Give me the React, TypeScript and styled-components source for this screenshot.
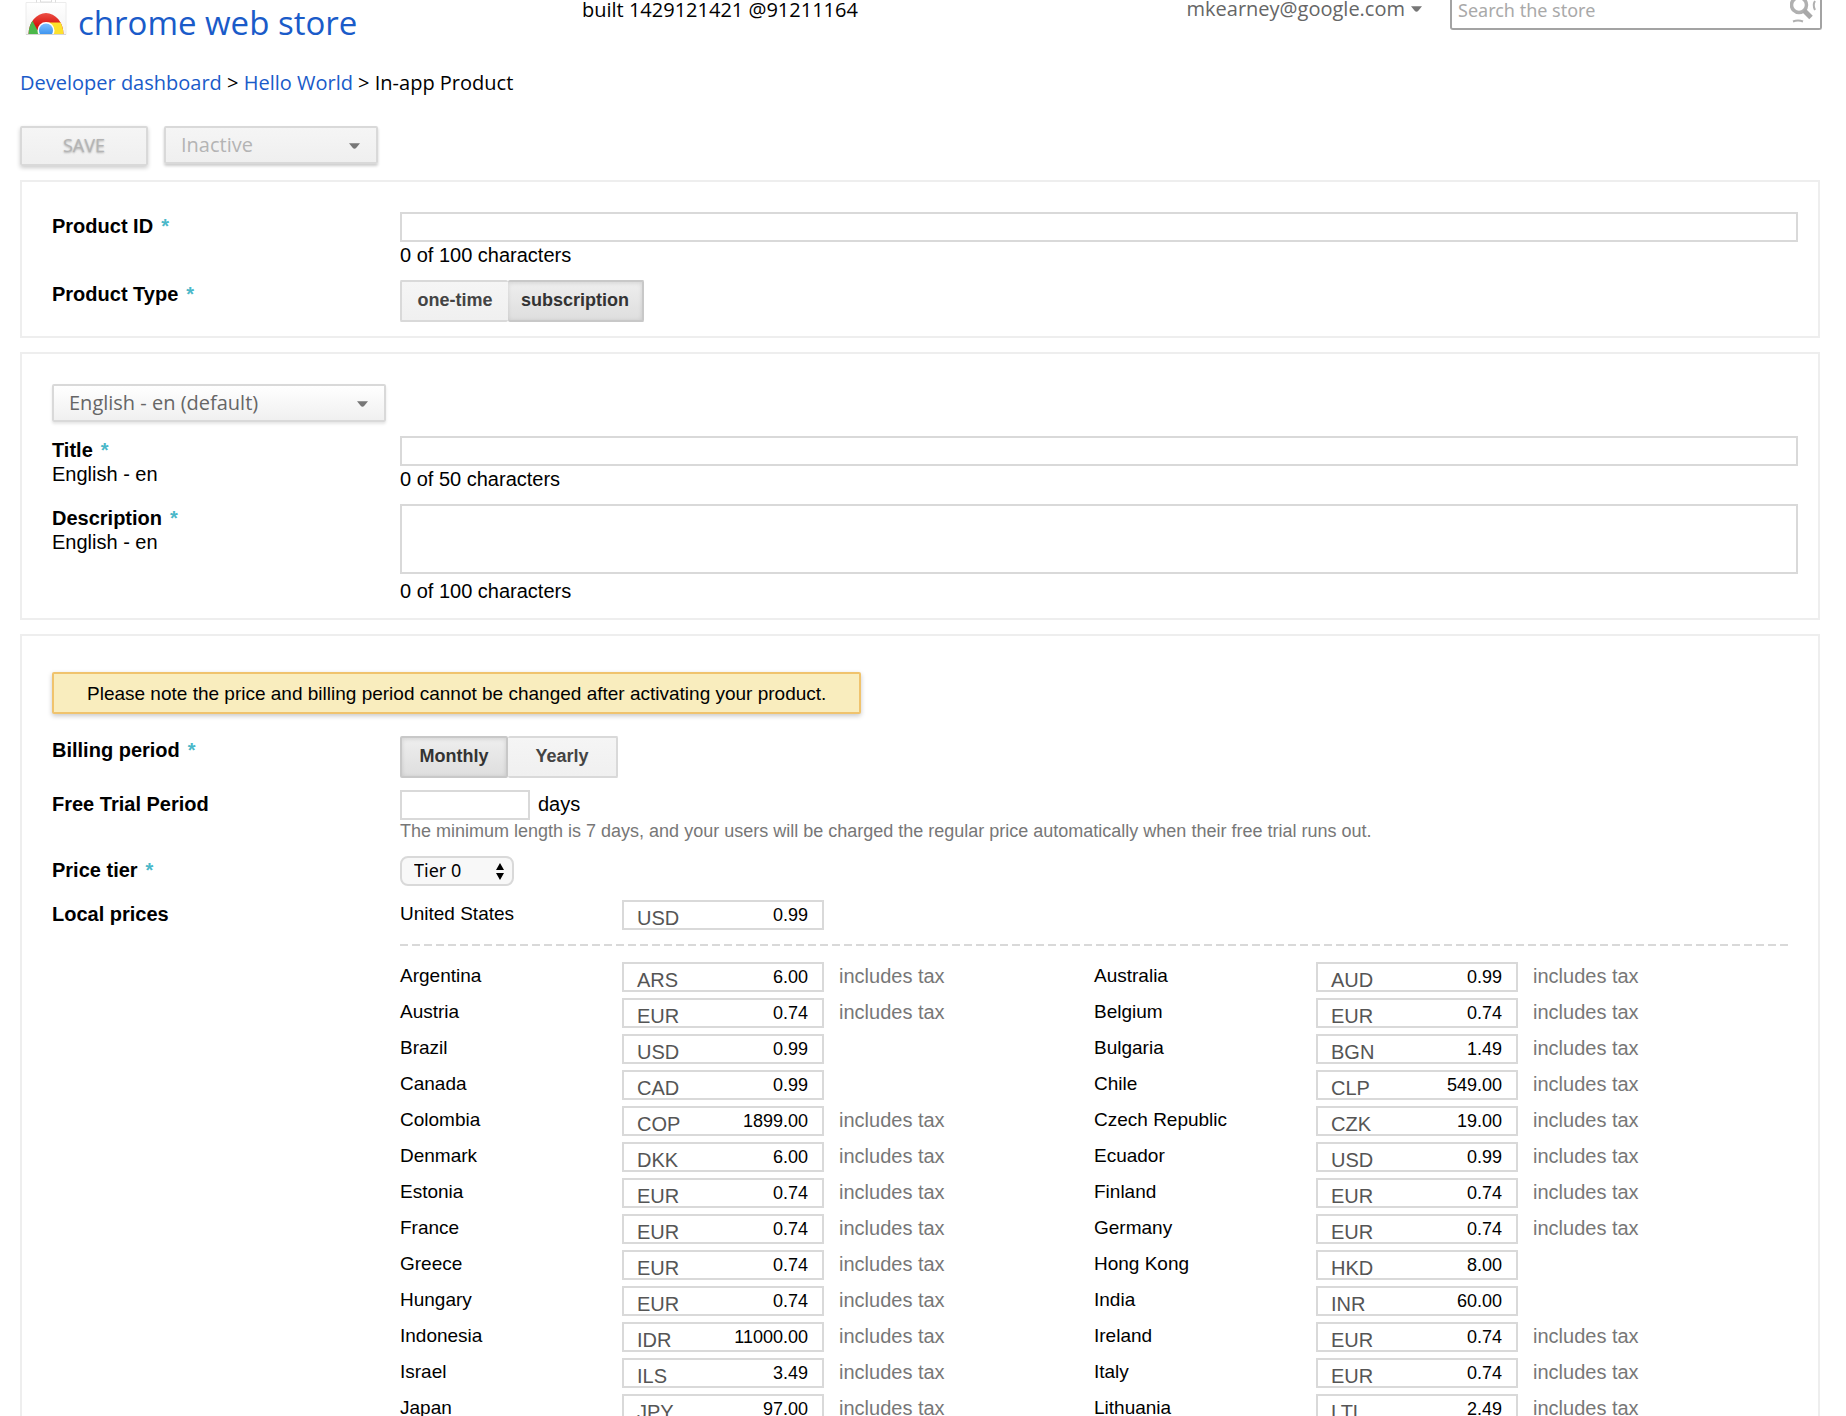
import React, { useState } from "react";
import styled, { createGlobalStyle, css } from "styled-components";

const sans = `"Liberation Sans", Arial, Helvetica, sans-serif`;
const open = `"Open Sans", "Noto Sans", sans-serif`;

const GlobalStyle = createGlobalStyle`
  *, *::before, *::after { box-sizing: border-box; }
  body { margin: 0; background: #fff; color: #000; font-family: ${sans}; font-size: 20px; }
  button, input, select, textarea { font: inherit; margin: 0; border-radius: 0; }
`;

const Page = styled.div`
  height: 100vh;
  overflow: hidden;
  padding: 0 26px 0 20px;
`;

const Header = styled.header`
  display: flex;
  align-items: flex-start;
  font-family: ${open};
  font-size: 20px;
  line-height: 20px;
`;

const Logo = styled.a`
  display: flex;
  gap: 10px;
  width: 562px;
  padding-left: 4px;
  color: #1a5bc9;
  font-size: 33px;
  line-height: 46px;
  text-decoration: none;
`;

const Account = styled.button`
  display: flex;
  align-items: center;
  gap: 6px;
  margin-left: auto;
  margin-right: 28px;
  padding: 0;
  border: 0;
  background: none;
  color: #666;
  line-height: 18px;
`;

const SearchBox = styled.form`
  display: flex;
  align-items: flex-start;
  width: 372px;
  height: 30px;
  margin-right: -2px;
  padding: 0 4px 0 6px;
  border: 2px solid #a3a3a3;
  border-top: 0;
  border-radius: 0 0 3px 3px;
`;

const SearchInput = styled.input`
  flex: 1;
  min-width: 0;
  height: 20px;
  padding: 0;
  border: 0;
  outline: 0;
  background: none;
  font-family: "Noto Sans", "Open Sans", sans-serif;
  font-size: 18px;
  line-height: 20px;
  &::placeholder { color: #a9a9a9; opacity: 1; }
`;

const IconButton = styled.button`
  display: flex;
  padding: 0;
  border: 0;
  background: none;
`;

const Breadcrumb = styled.nav`
  margin-top: 25px;
  font-family: ${open};
  line-height: 24px;
  a { color: #1a5bc9; text-decoration: none; }
`;

const Toolbar = styled.div`
  display: flex;
  align-items: flex-start;
  gap: 16px;
  margin: 31px 0 14px;
`;

const SaveButton = styled.button`
  width: 128px;
  height: 40px;
  padding: 0 0 2px;
  border: 2px solid #d9d9d9;
  border-radius: 2px;
  background: linear-gradient(#f5f5f5, #efefef);
  box-shadow: 0 2px 4px rgba(0, 0, 0, 0.2);
  color: #b4b4b4;
  font-family: ${open};
  font-size: 18px;
  text-shadow: 0 1px 2px rgba(0, 0, 0, 0.3);
`;

const MenuShell = styled.div<{ $width: number }>`
  position: relative;
  width: ${(p) => p.$width}px;
  svg { position: absolute; top: 17px; right: 18px; pointer-events: none; }
`;

const MenuSelect = styled.select<{ $muted?: boolean }>`
  display: block;
  appearance: none;
  width: 100%;
  height: 38px;
  padding: 0 36px 2px 15px;
  border: 2px solid #d9d9d9;
  border-radius: 2px;
  background: ${(p) => (p.$muted ? "linear-gradient(#f5f5f5, #efefef)" : "linear-gradient(#fff, #f0f0f0)")};
  box-shadow: 0 2px 3px rgba(0, 0, 0, ${(p) => (p.$muted ? 0.2 : 0.1)});
  color: ${(p) => (p.$muted ? "#b4b4b4" : "#666")};
  font-family: ${open};
  opacity: 1;
`;

const Panel = styled.section<{ $top?: number }>`
  margin-bottom: 14px;
  padding: ${(p) => p.$top ?? 30}px 20px 14px 30px;
  border: 2px solid #eee;
`;

const Row = styled.div<{ $gap?: number }>`
  display: grid;
  grid-template-columns: 348px minmax(0, 1fr);
  margin-bottom: ${(p) => p.$gap ?? 12}px;
  &:last-child { margin-bottom: 0; }
`;

const Label = styled.label`
  display: block;
  font-weight: bold;
  line-height: 28px;
`;

const Star = styled.span`
  margin-left: 8px;
  color: #4bb8c9;
`;

const SubLabel = styled.div`
  line-height: 20px;
`;

const fieldBox = css`
  display: block;
  border: 2px solid #d9d9d9;
  background: #fff;
  outline: 0;
`;

const TextInput = styled.input`
  ${fieldBox}
  width: 100%;
  height: 30px;
  padding: 0 8px;
`;

const TextArea = styled.textarea`
  ${fieldBox}
  width: 100%;
  height: 70px;
  margin-bottom: 4px;
  padding: 4px 8px;
  resize: none;
`;

const Counter = styled.div`
  line-height: 26px;
`;

const Segments = styled.div`
  display: flex;
`;

const Segment = styled.button<{ $on: boolean; $width: number }>`
  width: ${(p) => p.$width}px;
  height: 42px;
  padding: 0 0 2px;
  border: 2px solid ${(p) => (p.$on ? "#c8c8c8" : "#d9d9d9")};
  border-radius: 2px;
  background: ${(p) => (p.$on ? "linear-gradient(#eee, #dedede)" : "linear-gradient(#f5f5f5, #f0f0f0)")};
  box-shadow: ${(p) => (p.$on ? "inset 0 1px 4px rgba(0, 0, 0, 0.12)" : "none")};
  color: ${(p) => (p.$on ? "#333" : "#444")};
  font-size: 18px;
  font-weight: bold;
  & + & { border-left-width: ${(p) => (p.$on ? 2 : 0)}px; }
  &:first-child { border-right-width: ${(p) => (p.$on ? 2 : 0)}px; }
`;

const Notice = styled.p`
  width: fit-content;
  margin: 0 0 22px;
  padding: 8px 33px 6px;
  border: 2px solid #f0c36d;
  border-radius: 2px;
  background: #f9edbe;
  box-shadow: 0 2px 5px rgba(0, 0, 0, 0.22);
  font-size: 19px;
  line-height: 24px;
`;

const Trial = styled.div`
  display: flex;
  gap: 8px;
  line-height: 28px;
  height: 30px;
  input { width: 130px; }
`;

const Hint = styled.div`
  margin-bottom: 2px;
  color: #777;
  font-size: 18px;
  line-height: 22px;
`;

const TierShell = styled.div`
  position: relative;
  width: 114px;
  svg { position: absolute; top: 7px; right: 10px; pointer-events: none; }
`;

const TierSelect = styled.select`
  display: block;
  appearance: none;
  width: 100%;
  height: 30px;
  padding: 0 28px 2px 12px;
  border: 2px solid #d9d9d9;
  border-radius: 8px;
  background: #f8f8f8;
  color: #000;
  font-family: "Noto Sans", "Open Sans", sans-serif;
  font-size: 18px;
  line-height: 24px;
`;

const Divider = styled.hr`
  height: 2px;
  margin: 14px 10px 16px 0;
  border: 0;
  background: repeating-linear-gradient(90deg, #d9d9d9 0 8px, transparent 8px 12px);
`;

const PriceGrid = styled.div`
  display: grid;
  grid-template-columns: 1fr 1fr;
  gap: 6px 0;
  margin-right: 10px;
`;

const PriceRow = styled.div`
  display: flex;
  height: 30px;
  line-height: 28px;
`;

const Country = styled.label`
  width: 222px;
  font-size: 19px;
`;

const Money = styled.div`
  display: flex;
  align-items: flex-end;
  width: 202px;
  height: 30px;
  padding: 0 14px 0 13px;
  border: 2px solid #d9d9d9;
  color: #555;
  line-height: 20px;
`;

const Amount = styled.input`
  flex: 1;
  min-width: 0;
  height: 26px;
  padding: 0;
  border: 0;
  outline: 0;
  background: none;
  color: #000;
  font-size: 18px;
  text-align: right;
`;

const Tax = styled.span`
  margin-left: 15px;
  color: #777;
`;

const Caret = ({ size = 11 }: { size?: number }) => (
  <svg width={size} height={(size + 1) / 2} viewBox="0 0 12 6" aria-hidden="true">
    <path d="M0 0h12L8 5q-2 2-4 0z" fill="#777" />
  </svg>
);

const StoreMark = () => (
  <svg width="44" height="35" viewBox="0 0 44 35" aria-hidden="true">
    <defs>
      <linearGradient id="bag" x1="0" y1="0" x2="0" y2="1">
        <stop offset="0" stopColor="#fff" />
        <stop offset="1" stopColor="#f3f3f3" />
      </linearGradient>
      <linearGradient id="red" x1="0" y1="0" x2="0" y2="1">
        <stop offset="0" stopColor="#ef5a4f" />
        <stop offset="0.6" stopColor="#d8140f" />
      </linearGradient>
      <linearGradient id="blue" x1="0" y1="0" x2="0" y2="1">
        <stop offset="0" stopColor="#7cc0ff" />
        <stop offset="1" stopColor="#2a86ea" />
      </linearGradient>
      <clipPath id="dome">
        <path d="M4.500 34.500a17.500 21.500 0 0 1 35 0z" />
      </clipPath>
    </defs>
    <path d="M2 2.500h40V34.500H2z" fill="url(#bag)" stroke="#ececec" />
    <path d="M12.500 0v2.500M16.500 0v2h11V0M31.500 0v2.500" fill="none" stroke="#ddd" />
    <g clipPath="url(#dome)">
      <path d="M2 11h40v24H2z" fill="url(#red)" />
      <path d="M2 17l6 3 8 15H2z" fill="#4bb749" />
      <path d="M22 22.500h20V35H22z" fill="#fde12c" />
      <circle cx="22" cy="30.500" r="8.500" fill="#fff" />
      <circle cx="22" cy="30.500" r="7" fill="url(#blue)" />
    </g>
    <path d="M2 34.500h40" stroke="#d5d5d5" />
  </svg>
);

const SearchIcon = () => (
  <svg width="26" height="24" viewBox="0 0 26 24" fill="none" aria-hidden="true">
    <circle cx="9" cy="5" r="7.500" stroke="#b0b0b0" strokeWidth="3.500" />
    <path d="M14 10.500l7 7" stroke="#a8a8a8" strokeWidth="5" />
    <path d="M3 21.500q5-2 10 0" stroke="#b0b0b0" strokeWidth="2" />
    <path d="M25 1q-2.500 4 0 9" stroke="#b0b0b0" strokeWidth="2" />
  </svg>
);

const prices: [string, string, string, boolean][] = [
  ["Argentina", "ARS", "6.00", true],
  ["Australia", "AUD", "0.99", true],
  ["Austria", "EUR", "0.74", true],
  ["Belgium", "EUR", "0.74", true],
  ["Brazil", "USD", "0.99", false],
  ["Bulgaria", "BGN", "1.49", true],
  ["Canada", "CAD", "0.99", false],
  ["Chile", "CLP", "549.00", true],
  ["Colombia", "COP", "1899.00", true],
  ["Czech Republic", "CZK", "19.00", true],
  ["Denmark", "DKK", "6.00", true],
  ["Ecuador", "USD", "0.99", true],
  ["Estonia", "EUR", "0.74", true],
  ["Finland", "EUR", "0.74", true],
  ["France", "EUR", "0.74", true],
  ["Germany", "EUR", "0.74", true],
  ["Greece", "EUR", "0.74", true],
  ["Hong Kong", "HKD", "8.00", false],
  ["Hungary", "EUR", "0.74", true],
  ["India", "INR", "60.00", false],
  ["Indonesia", "IDR", "11000.00", true],
  ["Ireland", "EUR", "0.74", true],
  ["Israel", "ILS", "3.49", true],
  ["Italy", "EUR", "0.74", true],
  ["Japan", "JPY", "97.00", true],
  ["Lithuania", "LTL", "2.49", true],
];

function Price({ country, code, amount, tax }: { country: string; code: string; amount: string; tax: boolean }) {
  const id = `price-${country.replace(/\s/g, "-")}`;
  return (
    <PriceRow>
      <Country htmlFor={id}>{country}</Country>
      <Money>
        <span>{code}</span>
        <Amount id={id} defaultValue={amount} />
      </Money>
      {tax && <Tax>includes tax</Tax>}
    </PriceRow>
  );
}

function Toggle({ options, initial, label }: { options: [string, number][]; initial: string; label: string }) {
  const [value, setValue] = useState(initial);
  return (
    <Segments role="group" aria-labelledby={label}>
      {options.map(([name, width]) => (
        <Segment key={name} type="button" $width={width} $on={value === name} aria-pressed={value === name} onClick={() => setValue(name)}>
          {name}
        </Segment>
      ))}
    </Segments>
  );
}

export default function App() {
  return (
    <>
      <GlobalStyle />
      <Page>
        <Header>
          <Logo href="#">
            <StoreMark />
            chrome web store
          </Logo>
          <span>built 1429121421 @91211164</span>
          <Account type="button">
            mkearney@google.com
            <Caret />
          </Account>
          <SearchBox role="search" onSubmit={(e) => e.preventDefault()}>
            <SearchInput aria-label="Search the store" placeholder="Search the store" />
            <IconButton aria-label="Search">
              <SearchIcon />
            </IconButton>
          </SearchBox>
        </Header>

        <Breadcrumb>
          <a href="#">Developer dashboard</a> &gt; <a href="#">Hello World</a> &gt; In-app Product
        </Breadcrumb>

        <Toolbar>
          <SaveButton type="button" disabled>SAVE</SaveButton>
          <MenuShell $width={214}>
            <MenuSelect $muted disabled aria-label="Status">
              <option>Inactive</option>
            </MenuSelect>
            <Caret />
          </MenuShell>
        </Toolbar>

        <Panel>
          <Row>
            <Label htmlFor="product-id">Product ID<Star>*</Star></Label>
            <div>
              <TextInput id="product-id" />
              <Counter>0 of 100 characters</Counter>
            </div>
          </Row>
          <Row>
            <Label as="div" id="type-label">Product Type<Star>*</Star></Label>
            <Toggle label="type-label" initial="subscription" options={[["one-time", 108], ["subscription", 136]]} />
          </Row>
        </Panel>

        <Panel>
          <Row $gap={14}>
            <MenuShell $width={334}>
              <MenuSelect aria-label="Language">
                <option>English - en (default)</option>
              </MenuSelect>
              <Caret />
            </MenuShell>
          </Row>
          <Row>
            <div>
              <Label htmlFor="title">Title<Star>*</Star></Label>
              <SubLabel>English - en</SubLabel>
            </div>
            <div>
              <TextInput id="title" />
              <Counter>0 of 50 characters</Counter>
            </div>
          </Row>
          <Row>
            <div>
              <Label htmlFor="description">Description<Star>*</Star></Label>
              <SubLabel>English - en</SubLabel>
            </div>
            <div>
              <TextArea id="description" />
              <Counter>0 of 100 characters</Counter>
            </div>
          </Row>
        </Panel>

        <Panel $top={36}>
          <Notice>Please note the price and billing period cannot be changed after activating your product.</Notice>
          <Row>
            <Label as="div" id="billing-label">Billing period<Star>*</Star></Label>
            <Toggle label="billing-label" initial="Monthly" options={[["Monthly", 108], ["Yearly", 110]]} />
          </Row>
          <Row>
            <Label htmlFor="trial">Free Trial Period</Label>
            <div>
              <Trial>
                <TextInput id="trial" />
                <span>days</span>
              </Trial>
              <Hint>The minimum length is 7 days, and your users will be charged the regular price automatically when their free trial runs out.</Hint>
            </div>
          </Row>
          <Row $gap={14}>
            <Label htmlFor="tier">Price tier<Star>*</Star></Label>
            <TierShell>
              <TierSelect id="tier">
                <option>Tier 0</option>
              </TierSelect>
              <svg width="8" height="17" viewBox="0 0 8 17" aria-hidden="true">
                <path d="M4 0l4 7H0zM4 17l4-7H0z" />
              </svg>
            </TierShell>
          </Row>
          <Row>
            <Label as="div">Local prices</Label>
            <div>
              <Price country="United States" code="USD" amount="0.99" tax={false} />
              <Divider />
              <PriceGrid>
                {prices.map(([country, code, amount, tax]) => (
                  <Price key={country} country={country} code={code} amount={amount} tax={tax} />
                ))}
              </PriceGrid>
            </div>
          </Row>
        </Panel>
      </Page>
    </>
  );
}
